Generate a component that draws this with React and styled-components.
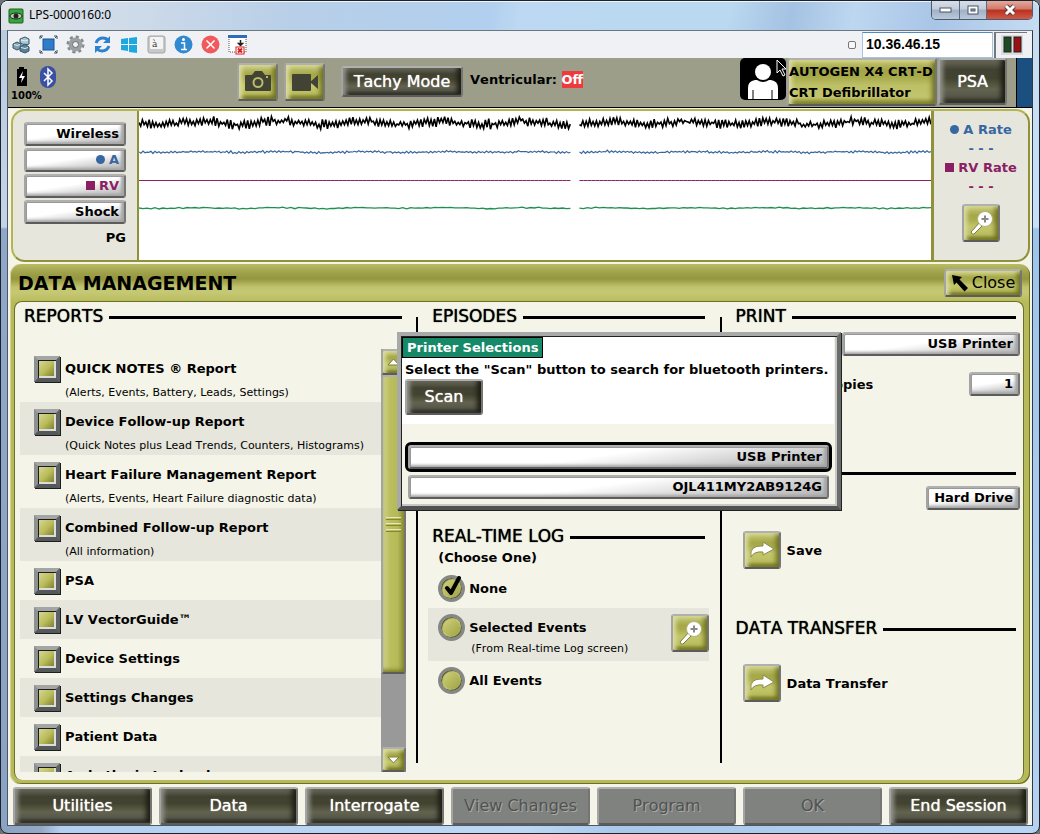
import React from "react";
import styled, { createGlobalStyle, css } from "styled-components";

const Global = createGlobalStyle`
  * { box-sizing: border-box; }
  body { margin: 0; background: #6d7076; font-kerning: none; }
  body, button, input { font-family: "DejaVu Sans", Verdana, sans-serif; color: #000; }
  button { cursor: pointer; font-kerning: none; }
  h1, h2, p { margin: 0; }
`;

/* ---------- window frame ---------- */

const Window = styled.div`
  height: 100vh;
  min-height: 720px;
  display: flex;
  flex-direction: column;
  padding: 0 6px 7px;
  border: 1px solid #1c222b;
  border-radius: 8px;
  background:
    linear-gradient(180deg, #b9c9de 0, #c3d3e8 226px, #8fa8c8 228px, #8ba3c2 100%) left / 6px 100% no-repeat,
    linear-gradient(180deg, #c9dcf0 0, #c5e0f8 226px, #9dc4ea 228px, #b4d2f0 100%) right / 6px 100% no-repeat,
    linear-gradient(90deg, #8ba3c2 0, #93a9c6 40px, #b4d0f0 60px, #bcd8f4 50%, #a9c8ea 60%, #b7d5f3 100%);
`;

const TitleBar = styled.header`
  flex: none;
  display: flex;
  align-items: flex-start;
  height: 29px;
  margin: 0 -6px;
  padding-left: 7px;
  border-radius: 7px 7px 0 0;
  box-shadow: inset 0 1px 0 #eef5fc;
  background: linear-gradient(100deg, #dfe3e8 0, #cfdbe9 12%, #b8cfe8 28%, #b1cfee 47%, #bcd8f2 50%, #bad8f0 70%, #a4c2e2 76%, #bdd7f0 82%, #a9c5e6 90%, #c5dcf2 100%);
`;

const WindowTitle = styled.h1`
  flex: 1;
  padding-left: 5px;
  font: 400 12px/28px "Noto Sans", "Open Sans", sans-serif;
`;

const AppIcon = styled.svg`
  margin-top: 7px;
`;

const WindowButtons = styled.div`
  display: flex;
  margin-right: 6px;
  border: 1px solid #4d5a6b;
  border-top: 0;
  border-radius: 0 0 5px 5px;
  overflow: hidden;
`;

const WindowButton = styled.button`
  display: grid;
  place-items: center;
  width: ${(p) => (p.$close ? 46 : 27)}px;
  height: 18px;
  padding: 0;
  border: 0;
  border-left: ${(p) => (p.$first ? 0 : "1px solid #5d6a7b")};
  background: ${(p) =>
    p.$close
      ? "linear-gradient(180deg, #e3a99d 0, #d0796a 45%, #b8311d 50%, #d0594a 100%)"
      : "linear-gradient(180deg, #d6dee9 0, #c2cddb 45%, #a1b1c6 50%, #b9c8da 100%)"};
`;

const Client = styled.main`
  flex: 1;
  min-height: 0;
  display: flex;
  flex-direction: column;
  border: 1px solid #4c5664;
  border-top-color: #6c7880;
  border-right-color: #2f3a48;
  background: #f4f4e8;
`;

/* ---------- viewer toolbar ---------- */

const Toolbar = styled.div`
  flex: none;
  display: flex;
  align-items: center;
  height: 27px;
  padding: 0 5px 0 2px;
  background: #f0f1f4;
`;

const ToolList = styled.div`
  flex: 1;
  display: flex;
  gap: 5px;
`;

const ToolButton = styled.button`
  display: grid;
  place-items: center;
  width: 22px;
  height: 22px;
  padding: 0;
  border: 0;
  background: none;
`;

const ToolCheck = styled.input`
  appearance: none;
  width: 8px;
  height: 8px;
  margin: 0 6px 0 0;
  border: 1px solid #777;
  border-radius: 2px;
  background: #f7f7f7;
`;

const AddressInput = styled.input`
  width: 131px;
  height: 26px;
  padding: 0 3px 2px;
  border: 1px solid #a6c4e0;
  border-top-color: #4f8bc0;
  background: #fff;
  font: 700 14px "Liberation Sans", Arial, sans-serif;
`;

const Traffic = styled.div`
  display: grid;
  place-items: center;
  width: 33px;
  height: 26px;
  margin-left: 1px;
  border-top: 1px solid #777;
  border-left: 2px solid #777;
  background: #f0f1f4;
`;

/* ---------- beveled controls ---------- */

const bevel = css`
  border: 2px solid;
  border-color: #b0b0b0 #757575 #5c5c5c #a4a4a4;
  border-radius: 3px;
`;

const LightButton = styled.button`
  ${bevel}
  flex: none;
  width: ${(p) => p.$width || "auto"};
  height: 24px;
  padding: 0 5px;
  text-align: right;
  font-weight: 700;
  font-size: 13px;
  line-height: 16px;
  background: linear-gradient(172deg, #fff 0, #fff 45%, #d2d2d2 75%, #b4b4b4 100%);
  box-shadow: inset 1px 1px 0 #999, inset -3px -2px 3px #a4a4a4;
  color: ${(p) => p.$color || "#000"};
`;

const DarkButton = styled.button`
  ${bevel}
  flex: none;
  width: ${(p) => p.$width || "auto"};
  height: ${(p) => p.$height || 38}px;
  padding: 0;
  font-size: 16px;
  line-height: 20px;
  color: #fff;
  text-shadow: 0 0 1px #fff;
  background: linear-gradient(180deg, #6b6b5b 0, #414232 22%, #42432f 42%, #62634f 68%, #56574a 84%, #2b2c20 100%);
  box-shadow: inset 5px 0 4px -2px #92938a, inset -5px -1px 5px -1px #1e1f14;

  &:disabled {
    color: #505250;
    text-shadow: 1px 1px 0 #a8aaa8;
    background: #7f827f;
    box-shadow: none;
  }
`;

const GoldButton = styled.button`
  ${bevel}
  flex: none;
  display: inline-flex;
  align-items: center;
  justify-content: center;
  gap: 3px;
  width: ${(p) => p.$width || 38}px;
  height: ${(p) => p.$height || 38}px;
  padding: 0;
  font-size: 16px;
  background: linear-gradient(180deg, #c8cb7c 0, #a5a748 28%, #a9ac4c 40%, #c2c56a 60%, #bcbf60 85%, #80822e 100%);
  box-shadow: inset 4px 2px 4px -1px #dbdd9e, inset -4px -3px 5px -1px #6f7120;
`;

const DeviceButton = styled(GoldButton)`
  display: block;
  width: 150px;
  height: 48px;
  margin: 0 1px;
  text-align: left;
  white-space: nowrap;
  font-size: 13px;
  font-weight: 700;
  line-height: 21px;
  background: linear-gradient(180deg, #c2c56a 0, #a2a448 25%, #a9ac4c 40%, #bdc066 58%, #c2c56c 85%, #9c9e44 100%);
`;

/* ---------- device header ---------- */

const DeviceHeader = styled.section`
  flex: none;
  display: flex;
  align-items: flex-start;
  height: 50px;
  border-bottom: 1px solid #000;
  background: #9c9e89;
`;

const Status = styled.div`
  width: 229px;
  padding: 7px 0 0 3px;
`;

const StatusIcons = styled.div`
  display: flex;
  align-items: center;
  gap: 12px;
  height: 24px;
  padding-left: 5px;
`;

const Percent = styled.p`
  font-size: 10px;
  font-weight: 700;
  line-height: 14px;
`;

const CaptureButtons = styled.div`
  display: flex;
  align-items: center;
  gap: 6px;
  padding-top: 5px;
  margin-right: 16px;
`;

const TachyMode = styled.div`
  flex: 1;
  display: flex;
  align-items: flex-start;
  gap: 7px;
  padding-top: 8px;
  font-size: 13px;
  font-weight: 700;
  line-height: 28px;
`;

const OffFlag = styled.strong`
  padding: 1px 0;
  background: #ee3a3c;
  color: #fff;
`;

const Patient = styled.div`
  position: relative;
  display: grid;
  place-items: end center;
  width: 46px;
  height: 42px;
  border-radius: 5px;
  background: #000;
`;

const Pointer = styled.svg`
  position: absolute;
  top: 1px;
  left: 36px;
  z-index: 1;
`;

const BlueEdge = styled.div`
  align-self: stretch;
  width: 16px;
  margin-left: 9px;
  border-left: 1px solid #000;
  background: #1b4f80;
`;

/* ---------- live traces ---------- */

const TracePanel = styled.section`
  flex: none;
  display: flex;
  height: 153px;
  margin: 1px 2px 2px 3px;
  border: 2px solid #b3b650;
  border-right-color: #8f9238;
  border-bottom-color: #8f9238;
  border-radius: 14px;
  overflow: hidden;
  background: #e6e6dc;
`;

const LeadList = styled.div`
  width: 124px;
  display: flex;
  flex-direction: column;
  gap: 2px;
  padding: 11px 11px 0 11px;
`;

const LeadText = styled.p`
  padding-top: 4px;
  text-align: right;
  font-size: 13px;
  line-height: 16px;
  font-weight: 700;
`;

const Mark = styled.i`
  display: inline-block;
  width: 9px;
  height: 9px;
  margin-right: 4px;
  border-radius: ${(p) => (p.$round ? "50%" : 0)};
  background: currentColor;
`;

const TraceArea = styled.div`
  flex: 1;
  min-width: 0;
  border: solid #8f9238;
  border-width: 0 3px 0 2px;
  background: #fff;

  svg { display: block; width: 100%; height: 149px; }
`;

const Rates = styled.div`
  width: 94px;
  display: flex;
  flex-direction: column;
  align-items: center;
  padding-top: 9px;
  font-size: 13px;
  line-height: 19px;
`;

const Rate = styled.p`
  text-align: center;
  white-space: nowrap;
  font-weight: 700;
  color: ${(p) => p.$color};
`;

const RateZoom = styled.div`
  margin-top: 8px;
`;

/* ---------- data management ---------- */

const DataPanel = styled.section`
  flex: 1;
  min-height: 0;
  display: flex;
  flex-direction: column;
  margin: 0 2px;
  padding: 0 6px 4px 4px;
  border-radius: 11px;
  background:
    linear-gradient(180deg, #b9bc63 0, #9c9e48 10px, #95973f 15px, #c0c36c 23px, #c6c975 28px, #b7ba5a 38px, #b7ba5a 100%);
  box-shadow: inset 1px 0 0 #d3d58f, inset -1px -1px 0 #6d6f25;
`;

const PanelHeader = styled.header`
  flex: none;
  display: flex;
  align-items: center;
  justify-content: space-between;
  height: 37px;
  padding: 0 2px 0 4px;
`;

const PanelTitle = styled.h2`
  font-size: 19px;
  line-height: 24px;
`;

const PanelBody = styled.div`
  position: relative;
  flex: 1;
  min-height: 0;
  display: grid;
  grid-template: minmax(0, 1fr) / minmax(0, 402fr) 2px minmax(0, 302fr) 2px minmax(0, 302fr);
  border: 1px solid #6d6f25;
  border-width: 1px 1px 0 1px;
  border-radius: 8px;
  background: #f4f4e8;
`;

const Divider = styled.div`
  margin: 15px 0 17px;
  background: #000;
`;

const Column = styled.div`
  min-width: 0;
  display: flex;
  flex-direction: column;
  padding: ${(p) => p.$pad};
`;

const Heading = styled.h2`
  display: flex;
  align-items: center;
  gap: 6px;
  height: 28px;
  margin: ${(p) => p.$margin || "0 4px"};
  white-space: nowrap;
  font-size: 17px;
  font-weight: 400;
  text-shadow: 0 0 1px #000;

  &::after {
    content: "";
    flex: 1;
    height: 3px;
    margin-top: 2px;
    background: #000;
  }
`;

const ReportArea = styled.div`
  flex: 1;
  min-height: 0;
  display: flex;
  margin: 19px 0 8px;
`;

const ReportList = styled.ul`
  flex: 1;
  margin: 0;
  padding: 0;
  list-style: none;
  overflow: hidden;
`;

const ReportRow = styled.li`
  height: ${(p) => (p.$tall ? 53 : 39)}px;
  padding: 6px 0 0 14px;
  background: ${(p) => (p.$shade ? "#e6e6dc" : "transparent")};
`;

const OptionLabel = styled.label`
  display: flex;
  align-items: center;
  gap: 4px;
  height: 27px;
  white-space: nowrap;
  font-size: 13px;
  font-weight: 700;
`;

const Note = styled.p`
  padding-left: ${(p) => p.$indent || 31}px;
  white-space: nowrap;
  font-size: 11px;
  line-height: ${(p) => p.$leading || 22}px;
`;

const Tick = styled.input`
  appearance: none;
  width: 26px;
  height: 26px;
  margin: 0 1px 0 0;
  border: 4px solid;
  border-color: #a4a6a6 #5e6161 #555858 #8d9090;
  background: linear-gradient(135deg, #d9da9c 0, #b9bc58 50%, #6e7026 100%);
  box-shadow:
    inset 1px 1px 0 #1c1c1c,
    inset -2px -2px 0 #dcdcdc,
    1px 1px 0 #1c1e1e;
`;

const ScrollBar = styled.div`
  display: flex;
  flex-direction: column;
  width: 25px;
  background: #999;
`;

const ScrollThumb = styled.div`
  ${bevel}
  flex: 0 0 299px;
  display: flex;
  flex-direction: column;
  align-items: center;
  justify-content: center;
  gap: 3px;
  margin-bottom: auto;
  background: linear-gradient(90deg, #cfd18a 0, #bbbe5c 35%, #b6b957 70%, #8a8c36 100%);
  box-shadow: inset 0 -4px 4px -2px #777924;
`;

const Grip = styled.span`
  width: 15px;
  height: 3px;
  border-top: 1px solid #e6e7b8;
  border-bottom: 1px solid #85872f;
`;

const EpisodeSection = styled.section`
  min-height: 220px;
`;

const RadioRow = styled.div`
  display: flex;
  align-items: flex-start;
  justify-content: space-between;
  height: ${(p) => (p.$tall ? 53 : 39)}px;
  padding: 6px 0 6px 10px;
  background: ${(p) => (p.$shade ? "#e6e6dc" : "transparent")};
`;

const Choose = styled.p`
  padding: 0 0 3px 10px;
  font-size: 13px;
  font-weight: 700;
  line-height: 16px;
`;

const RadioWrap = styled.span`
  position: relative;
  display: block;
  width: 27px;
  height: 27px;

  svg { position: absolute; top: 1px; left: 6px; }
`;

const Radio = styled.input`
  appearance: none;
  width: 27px;
  height: 27px;
  margin: 0;
  border: 3px solid #868888;
  border-radius: 50%;
  background: linear-gradient(135deg, #d9db98 0, #bcbf62 40%, #9a9d44 100%);
  box-shadow: inset 1px 1px 1px #55572a, inset -1px -1px 1px #55572a, inset 0 0 0 2px #c6c97c;
`;

const Line = styled.div`
  display: flex;
  align-items: center;
  justify-content: ${(p) => (p.$end ? "flex-end" : "space-between")};
  margin: ${(p) => p.$margin || 0};
  padding-left: 7px;
  font-size: 13px;
  font-weight: 700;
`;

const ActionLine = styled.label`
  display: flex;
  align-items: center;
  gap: 6px;
  margin: ${(p) => p.$margin};
  padding-left: 7px;
  font-size: 13px;
  font-weight: 700;
`;

const Dialog = styled.div`
  position: absolute;
  top: 30px;
  left: 382px;
  width: 444px;
  padding: 1px 3px 3px 1px;
  border: 4px solid;
  border-color: #a8aaaa #6a6c6c #505252 #a8aaaa;
  background: #f4f4e8;
  box-shadow: inset 1px 1px 0 #222, inset -2px -2px 0 #c6c8c8, 1px 1px 0 #222;
`;

const DialogIntro = styled.div`
  height: 87px;
  background: #fff;
`;

const DialogTitle = styled.h2`
  display: table;
  padding: 0 4px;
  border: 1px solid #000;
  background: #168a68;
  color: #fff;
  font-size: 13px;
  line-height: 19px;
`;

const DialogText = styled.p`
  padding: 4px 0 1px 3px;
  white-space: nowrap;
  font-size: 13px;
  font-weight: 700;
  line-height: 16px;
`;

const ScanLine = styled.div`
  padding-left: 3px;
`;

const PrinterList = styled.div`
  display: flex;
  flex-direction: column;
  gap: 6px;
  padding: 21px 5px 4px 6px;
`;

const PrinterButton = styled(LightButton)`
  outline: ${(p) => (p.$selected ? "3px solid #000" : "none")};
`;

const Footer = styled.footer`
  flex: none;
  display: grid;
  grid-template-columns: repeat(7, minmax(0, 1fr));
  gap: 7px;
  padding: 3px 4px 0 5px;
`;

/* ---------- icons ---------- */

const MagnifierIcon = () => (
  <svg width="26" height="26" viewBox="0 0 26 26">
    <path d="M3 22 L12 12 L15 15 L6 24 Q4 25 3 22Z" fill="#fff" stroke="#7a7c3c" strokeWidth="1" />
    <circle cx="17" cy="9" r="7.500" fill="#fff" stroke="#b2b47c" />
    <path d="M17 5.500v7M13.500 9h7" stroke="#888" strokeWidth="2" />
  </svg>
);

const ForwardIcon = () => (
  <svg width="26" height="20" viewBox="0 0 26 20">
    <path d="M2 17 Q0 5 14 6 L14 2 L25 9 L14 15 L14 12 Q5 11 2 17Z" fill="#fff" stroke="#8a8c4c" strokeWidth="1" />
  </svg>
);

const CameraIcon = () => (
  <svg width="28" height="24" viewBox="0 0 28 24">
    <path d="M2 5h6l3-4h7l3 4h5q1 0 1 1v14q0 1-1 1H2q-1 0-1-1V6q0-1 1-1Z" fill="#434335" />
    <circle cx="14" cy="12.500" r="4.500" fill="none" stroke="#b9bb6a" strokeWidth="2" />
    <rect x="22" y="6" width="2" height="2" fill="#b9bb6a" />
  </svg>
);

const VideoIcon = () => (
  <svg width="28" height="20" viewBox="0 0 28 20">
    <rect x="1" y="2" width="19" height="17" rx="1" fill="#434335" />
    <path d="M19 10 L27 3v14Z" fill="#434335" />
  </svg>
);

const CloseArrowIcon = () => (
  <svg width="18" height="18" viewBox="0 0 18 18">
    <path d="M1 1 L11 3 L8.500 5.500 L17 14 L13.500 17.500 L5.500 8.500 L3 11Z" fill="#000" />
  </svg>
);

const TriangleIcon = ({ down }) => (
  <svg width="13" height="8" viewBox="0 0 13 8">
    <path d={down ? "M1 1h11L6.500 7Z" : "M1 7h11L6.500 1Z"} fill="#fff" stroke="#7b7d38" strokeWidth="1" />
  </svg>
);

const CheckMark = () => (
  <svg width="18" height="21" viewBox="0 0 18 21">
    <path d="M3 12 L7 17 L15 2" fill="none" stroke="#000" strokeWidth="4" strokeLinejoin="round" strokeLinecap="round" />
  </svg>
);

const toolIcons = [
  ["Connections", (
    <g stroke="#34576c">
      <path d="M1 9l4-2 4 2v4l-4 2-4-2Z" fill="#7e9fb1" />
      <path d="M8 4l5-2 4 2v5l-4 1-5-2Z" fill="#a9c3cf" />
      <path d="M8 12l5-3 4 3v4l-4 2-5-2Z" fill="#5b7f95" />
      <path d="M2 9.500l3 1 3-1M9 5l4 1 3-1M9 12.500l4 1 3-1" fill="none" stroke="#e4eef2" />
    </g>
  )],
  ["Full screen", (
    <g>
      <rect x="4" y="4" width="11" height="11" fill="#2f7cc9" stroke="#1c5596" />
      <path d="M1 4V1h3M15 1h3v3M18 15v3h-3M4 18H1v-3M1 1l2 2M18 1l-2 2M18 18l-2-2M1 18l2-2" fill="none" stroke="#33506e" />
    </g>
  )],
  ["Settings", (
    <g>
      <circle cx="9.500" cy="9.500" r="7.500" fill="none" stroke="#85898c" strokeWidth="3" strokeDasharray="3 2.890" />
      <circle cx="9.500" cy="9.500" r="5" fill="none" stroke="#9ba0a3" strokeWidth="4" />
      <circle cx="9.500" cy="9.500" r="3" fill="#f0f1f4" stroke="#63676a" />
    </g>
  )],
  ["Refresh", (
    <g fill="none" stroke="#2c82cc" strokeWidth="3">
      <path d="M3 8q2-5 7-5 3 0 5 2" />
      <path d="M16 11q-2 5-7 5-3 0-5-2" />
      <path d="M17 1v7h-7ZM2 18v-7h7Z" fill="#2c82cc" stroke="none" />
    </g>
  )],
  ["Start", (
    <path d="M1 4l7-1v6H1ZM9 3l8-1v7H9ZM1 10h7v6l-7-1ZM9 10h8v8l-8-1Z" fill="#1fa7e0" />
  )],
  ["Keyboard", (
    <g>
      <rect x="1" y="1" width="17" height="17" rx="2" fill="#c9c9c9" stroke="#a5a5a5" />
      <rect x="3" y="2" width="13" height="12" rx="1" fill="#f4f4f4" />
      <text x="5" y="12" fontSize="9" fontFamily="DejaVu Serif, serif" fill="#333">à</text>
    </g>
  )],
  ["Information", (
    <g>
      <circle cx="9.500" cy="9.500" r="9" fill="#3189cf" />
      <path d="M7 8h3.500v6M7 14.500h6" fill="none" stroke="#fff" strokeWidth="1.500" />
      <circle cx="9.500" cy="4.500" r="1.500" fill="#fff" />
    </g>
  )],
  ["Disconnect", (
    <g>
      <circle cx="9.500" cy="9.500" r="9" fill="#f05a5c" />
      <path d="M5.500 5.500l8 8M13.500 5.500l-8 8" stroke="#fff" strokeWidth="1.500" />
    </g>
  )],
  ["Auto hide", (
    <g>
      <rect x="1" y="1" width="17" height="16" fill="#fff" stroke="#555" strokeDasharray="1 1" />
      <rect x="0" y="0" width="19" height="3" fill="#2f6cb8" />
      <path d="M12.500 5v5M10.500 8.500h4l-2 2Z" stroke="#222" fill="#222" strokeWidth="1.500" />
      <rect x="8" y="12" width="8" height="7" fill="#fff" stroke="#d8201f" />
      <path d="M10 13.500l4 4M14 13.500l-4 4" stroke="#d8201f" strokeWidth="2" />
    </g>
  )],
];

/* ---------- trace data ---------- */

const makeTrace = (from, to, step, base, amplitude, drift, seed) => {
  let state = seed;
  const rand = () => {
    state = (state * 16807) % 2147483647;
    return state / 2147483647 - 0.5;
  };
  let path = "";
  let flip = 1;
  for (let x = from; x <= to; x += step) {
    flip = -flip;
    const y = base + flip * amplitude * (0.6 + rand()) + drift * (Math.sin(x / 9) * rand() + Math.sin(x / 13) * 0.4);
    path += `${path ? "L" : "M"}${x} ${y.toFixed(1)}`;
  }
  return path;
};

const traces = [
  { color: "#000", width: 1.6, step: 1.7, base: 12, amplitude: 4, drift: 4, seed: 71 },
  { color: "#3767a0", width: 1.2, step: 2, base: 41, amplitude: 1, drift: 1, seed: 37 },
  { color: "#8a2063", width: 1, step: 4, base: 69.5, amplitude: 0, drift: 0, seed: 5 },
  { color: "#1d9050", width: 1.3, step: 4, base: 97, amplitude: 0.4, drift: 1, seed: 13 },
];

const Traces = () => (
  <svg viewBox="0 0 793 149" preserveAspectRatio="none" role="img" aria-label="Live traces">
    {traces.map((t) => (
      <g key={t.color} fill="none" stroke={t.color} strokeWidth={t.width}>
        <path d={makeTrace(0, 432, t.step, t.base, t.amplitude, t.drift, t.seed)} />
        <path d={makeTrace(441, 793, t.step, t.base, t.amplitude, t.drift, t.seed + 90)} />
      </g>
    ))}
  </svg>
);

const reports = [
  ["QUICK NOTES ® Report", "(Alerts, Events, Battery, Leads, Settings)"],
  ["Device Follow-up Report", "(Quick Notes plus Lead Trends, Counters, Histograms)"],
  ["Heart Failure Management Report", "(Alerts, Events, Heart Failure diagnostic data)"],
  ["Combined Follow-up Report", "(All information)"],
  ["PSA"],
  ["LV VectorGuide™"],
  ["Device Settings"],
  ["Settings Changes"],
  ["Patient Data"],
  ["Arrhythmia Logbook"],
];

const footerButtons = [
  ["Utilities"], ["Data"], ["Interrogate"], ["View Changes", true], ["Program", true], ["OK", true], ["End Session"],
];

export default function App() {
  return (
    <>
      <Global />
      <Window>
        <TitleBar>
          <AppIcon width="16" height="16" viewBox="0 0 16 16">
            <rect x="1" y="1" width="14" height="14" rx="1" fill="#35a83c" stroke="#1d5e22" strokeWidth="1" />
            <ellipse cx="8" cy="8" rx="6" ry="3" fill="#b9cfb6" stroke="#222" />
            <circle cx="8" cy="8" r="2.500" fill="#222" />
          </AppIcon>
          <WindowTitle>LPS-0000160:0</WindowTitle>
          <WindowButtons>
            <WindowButton $first aria-label="Minimize">
              <svg width="13" height="6"><rect x="1" y="1" width="11" height="4" fill="#fff" stroke="#4a5565" /></svg>
            </WindowButton>
            <WindowButton aria-label="Maximize">
              <svg width="12" height="10"><rect x="1" y="1" width="10" height="8" fill="#fff" stroke="#4a5565" /><rect x="4" y="4" width="4" height="2" fill="#9ab" stroke="#4a5565" /></svg>
            </WindowButton>
            <WindowButton $close aria-label="Close window">
              <svg width="14" height="12" viewBox="0 0 14 12">
                <path d="M3 2l8 8M11 2l-8 8" stroke="#5a3a3a" strokeWidth="5" />
                <path d="M3 2l8 8M11 2l-8 8" stroke="#fff" strokeWidth="3" />
              </svg>
            </WindowButton>
          </WindowButtons>
        </TitleBar>

        <Client>
          <Toolbar>
            <ToolList>
              {toolIcons.map(([name, drawing]) => (
                <ToolButton key={name} aria-label={name}>
                  <svg width="19" height="20" viewBox="0 0 19 20">{drawing}</svg>
                </ToolButton>
              ))}
            </ToolList>
            <ToolCheck type="checkbox" aria-label="Lock address" />
            <AddressInput aria-label="Address" defaultValue="10.36.46.15" />
            <Traffic>
              <svg width="22" height="20">
                <rect width="22" height="20" fill="#dcdcdf" />
                <rect x="3" y="2" width="7" height="15" fill="#1d4a22" stroke="#222" />
                <rect x="13" y="2" width="7" height="15" fill="#9c0f12" stroke="#222" />
              </svg>
            </Traffic>
          </Toolbar>

          <DeviceHeader>
            <Status>
              <StatusIcons>
                <svg width="12" height="22" viewBox="0 0 12 22">
                  <path d="M3 1h5v2h3v17H1V3h2Z" fill="#000" />
                  <path d="M7 5L3 12h3l-1 5 4-7H6Z" fill="#fff" />
                </svg>
                <svg width="16" height="22" viewBox="0 0 16 22">
                  <rect width="16" height="22" rx="8" fill="#3950a5" />
                  <path d="M4 7l8 8-4 4V3l4 4-8 8" fill="none" stroke="#fff" strokeWidth="1.500" />
                </svg>
              </StatusIcons>
              <Percent>100%</Percent>
            </Status>
            <CaptureButtons>
              <GoldButton $width={41} aria-label="Take snapshot"><CameraIcon /></GoldButton>
              <GoldButton $width={41} aria-label="Record video"><VideoIcon /></GoldButton>
            </CaptureButtons>
            <TachyMode>
              <DarkButton $width="122px" $height={31}>Tachy Mode</DarkButton>
              <span>Ventricular: <OffFlag>Off</OffFlag></span>
            </TachyMode>
            <Patient>
              <svg width="32" height="36" viewBox="0 0 32 36">
                <circle cx="16" cy="8" r="8" fill="#fff" />
                <path d="M1 35V24q0-7 7-8h2q6 4 12 0h2q7 1 7 8v11Z" fill="#fff" />
                <path d="M6 26v9M25 26v9" stroke="#000" />
              </svg>
              <Pointer width="12" height="18" viewBox="0 0 12 18">
                <path d="M1 1v13l3-3 3 6 2-1-3-6h4Z" fill="#000" stroke="#fff" />
              </Pointer>
            </Patient>
            <DeviceButton>AUTOGEN X4 CRT-D<br />CRT Defibrillator</DeviceButton>
            <DarkButton $width="69px" $height={47}>PSA</DarkButton>
            <BlueEdge />
          </DeviceHeader>

          <TracePanel>
            <LeadList>
              <LightButton>Wireless</LightButton>
              <LightButton $color="#3767a0"><Mark $round />A</LightButton>
              <LightButton $color="#8a2063"><Mark />RV</LightButton>
              <LightButton>Shock</LightButton>
              <LeadText>PG</LeadText>
            </LeadList>
            <TraceArea><Traces /></TraceArea>
            <Rates>
              <Rate $color="#3767a0"><Mark $round />A Rate</Rate>
              <Rate $color="#3767a0">- - -</Rate>
              <Rate $color="#8a2063"><Mark />RV Rate</Rate>
              <Rate $color="#8a2063">- - -</Rate>
              <RateZoom><GoldButton aria-label="Zoom traces"><MagnifierIcon /></GoldButton></RateZoom>
            </Rates>
          </TracePanel>

          <DataPanel>
            <PanelHeader>
              <PanelTitle>DATA MANAGEMENT</PanelTitle>
              <GoldButton $width={78} $height={28}><CloseArrowIcon />Close</GoldButton>
            </PanelHeader>
            <PanelBody>
              <Column $pad="0 10px 0 5px">
                <Heading>REPORTS</Heading>
                <ReportArea>
                  <ReportList>
                    {reports.map(([name, note], i) => (
                      <ReportRow key={name} $tall={!!note} $shade={i % 2 === 1}>
                        <OptionLabel><Tick type="checkbox" />{name}</OptionLabel>
                        {note && <Note>{note}</Note>}
                      </ReportRow>
                    ))}
                  </ReportList>
                  <ScrollBar>
                    <GoldButton $width={25} $height={26} aria-label="Scroll up"><TriangleIcon /></GoldButton>
                    <ScrollThumb><Grip /><Grip /><Grip /></ScrollThumb>
                    <GoldButton $width={25} $height={25} aria-label="Scroll down"><TriangleIcon down /></GoldButton>
                  </ScrollBar>
                </ReportArea>
              </Column>
              <Divider />
              <Column $pad="0 11px 0 10px">
                <EpisodeSection><Heading>EPISODES</Heading></EpisodeSection>
                <Heading>REAL-TIME LOG</Heading>
                <Choose>(Choose One)</Choose>
                <RadioRow>
                  <OptionLabel>
                    <RadioWrap><Radio type="radio" name="log" defaultChecked /><CheckMark /></RadioWrap>None
                  </OptionLabel>
                </RadioRow>
                <RadioRow $tall $shade>
                  <div>
                    <OptionLabel><Radio type="radio" name="log" />Selected Events</OptionLabel>
                    <Note $indent={33} $leading={16}>(From Real-time Log screen)</Note>
                  </div>
                  <GoldButton aria-label="Show selected events"><MagnifierIcon /></GoldButton>
                </RadioRow>
                <RadioRow>
                  <OptionLabel><Radio type="radio" name="log" />All Events</OptionLabel>
                </RadioRow>
              </Column>
              <Divider />
              <Column $pad="0 3px 0 14px">
                <Heading $margin="0 4px 0 0">PRINT</Heading>
                <Line $end $margin="2px 0 16px"><LightButton $width="178px">USB Printer</LightButton></Line>
                <Line><span>Number of Copies</span><LightButton $width="51px">1</LightButton></Line>
                <Heading as="div" $margin="62px 4px 0 0" />
                <Line $end><LightButton $width="94px">Hard Drive</LightButton></Line>
                <ActionLine $margin="21px 0 45px"><GoldButton><ForwardIcon /></GoldButton>Save</ActionLine>
                <Heading $margin="0 4px 0 0">DATA TRANSFER</Heading>
                <ActionLine $margin="22px 0 0"><GoldButton><ForwardIcon /></GoldButton>Data Transfer</ActionLine>
              </Column>

              <Dialog role="dialog" aria-label="Printer Selections">
                <DialogIntro>
                  <DialogTitle>Printer Selections</DialogTitle>
                  <DialogText>Select the "Scan" button to search for bluetooth printers.</DialogText>
                  <ScanLine><DarkButton $width="78px" $height={36}>Scan</DarkButton></ScanLine>
                </DialogIntro>
                <PrinterList>
                  <PrinterButton $selected>USB Printer</PrinterButton>
                  <PrinterButton>OJL411MY2AB9124G</PrinterButton>
                </PrinterList>
              </Dialog>
            </PanelBody>
          </DataPanel>

          <Footer>
            {footerButtons.map(([name, disabled]) => (
              <DarkButton key={name} disabled={disabled}>{name}</DarkButton>
            ))}
          </Footer>
        </Client>
      </Window>
    </>
  );
}
